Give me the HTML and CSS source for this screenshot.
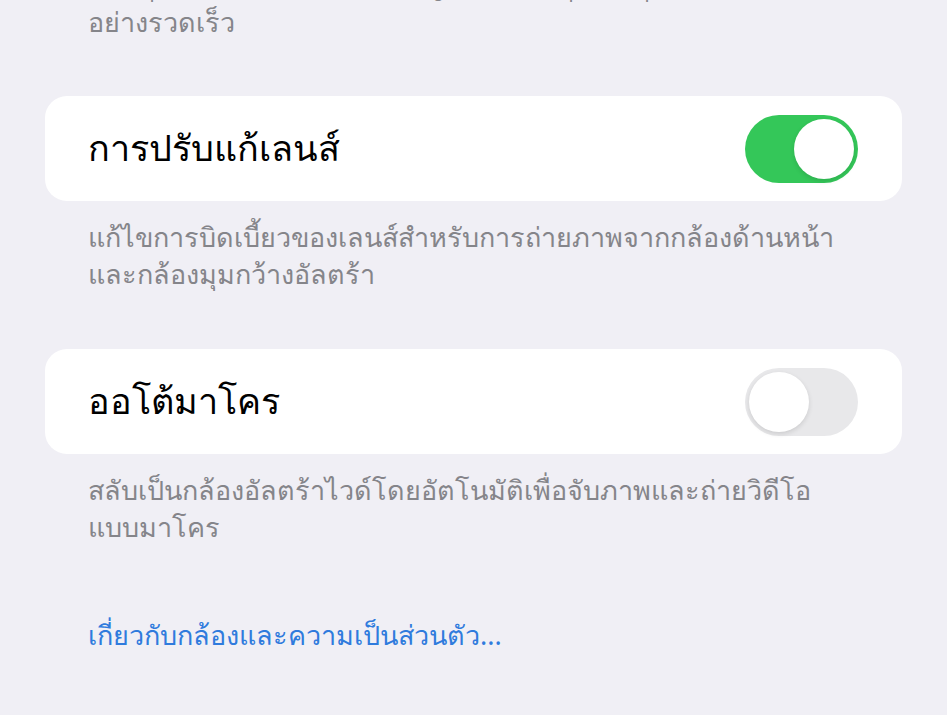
FILE: index.html
```html
<!DOCTYPE html>
<html lang="th">
<head>
  <meta charset="UTF-8">
  <title>กล้อง</title>
  <link rel="stylesheet" href="styles.css">
</head>
<body>
  <div class="page">
    <p class="note note-top">
      ปรับคุณภาพของภาพอย่างชาญฉลาดเมื่อคุณกดปุ่มชัตเตอร์<br>
      อย่างรวดเร็ว
    </p>

    <div class="cell">
      <span class="cell-title">การปรับแก้เลนส์</span>
      <span class="switch on"><span class="knob"></span></span>
    </div>
    <p class="note">
      แก้ไขการบิดเบี้ยวของเลนส์สำหรับการถ่ายภาพจากกล้องด้านหน้า<br>
      และกล้องมุมกว้างอัลตร้า
    </p>

    <div class="cell">
      <span class="cell-title">ออโต้มาโคร</span>
      <span class="switch"><span class="knob"></span></span>
    </div>
    <p class="note">
      สลับเป็นกล้องอัลตร้าไวด์โดยอัตโนมัติเพื่อจับภาพและถ่ายวิดีโอ<br>
      แบบมาโคร
    </p>

    <a class="link" href="#">เกี่ยวกับกล้องและความเป็นส่วนตัว...</a>
  </div>
</body>
</html>
```

FILE: styles.css
```css
body {
  margin: 0;
  background-color: #f0eff5;
  font-family: "Noto Sans", sans-serif;
  overflow: hidden;
}

.page {
  padding: 0 45px;
  margin-top: -34px;
}

.note {
  margin: 0;
  padding: 17px 43px 0;
  font-size: 27px;
  line-height: 37px;
  color: #85858a;
}

.note-top {
  padding-top: 0;
  margin-bottom: 56px;
}

.cell {
  display: flex;
  align-items: center;
  justify-content: space-between;
  height: 105px;
  padding: 0 44px 0 43px;
  background-color: #fff;
  border-radius: 22px;
}

.cell + .note {
  margin-bottom: 57px;
}

.cell-title {
  font-size: 36px;
  color: #000;
}

.switch {
  position: relative;
  width: 113px;
  height: 68px;
  border-radius: 34px;
  background-color: #e8e8ea;
}

.switch.on {
  background-color: #34c759;
}

.knob {
  position: absolute;
  top: 4px;
  left: 4px;
  width: 60px;
  height: 60px;
  border-radius: 50%;
  background-color: #fff;
  box-shadow: 0 2px 5px rgba(0, 0, 0, 0.12);
}

.switch.on .knob {
  left: 49px;
}

.link {
  display: block;
  padding: 12px 43px 0;
  font-size: 27px;
  color: #2f7bdd;
  text-decoration: none;
}
```
